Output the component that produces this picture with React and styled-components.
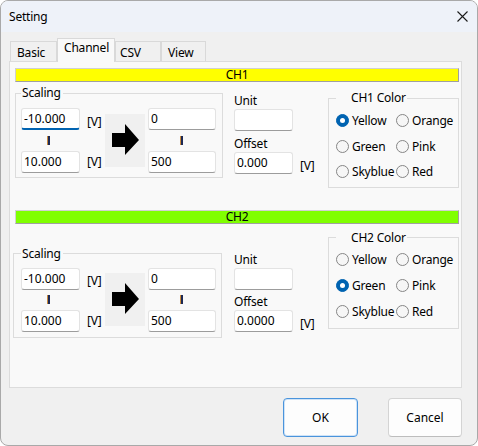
import React from 'react';
import styled, { createGlobalStyle } from 'styled-components';

const GlobalStyle = createGlobalStyle`
  html, body { margin: 0; padding: 0; background: #ffffff; }
  body {
    font-family: "Segoe UI", "Noto Sans", sans-serif;
    font-size: 12px;
    letter-spacing: -0.2px;
    color: #000;
  }
  * { box-sizing: border-box; }
`;

/** Window chrome **/
const Window = styled.div`
  width: 478px;
  height: 446px;
  border: 1px solid #a9a9a9;
  border-radius: 8px;
  background: #f0f0f0;
  overflow: hidden;
  display: flex;
  flex-direction: column;
`;

const TitleBar = styled.div`
  height: 31px;
  flex: none;
  background: #eef2f9;
  display: flex;
  align-items: center;
  justify-content: space-between;
  padding: 0 9px 0 8px;
  font-size: 12px;
`;

const Body = styled.div`
  flex: 1;
  display: flex;
  flex-direction: column;
  padding: 6px 0 0 8px;
`;

/** Tabs **/
const TabStrip = styled.div`
  height: 23px;
  display: flex;
  align-items: flex-end;
  padding-left: 1px;
`;

const Tab = styled.div`
  width: ${p => p.$w}px;
  height: ${p => (p.$active ? 24 : 20)}px;
  margin-bottom: ${p => (p.$active ? -1 : 0)}px;
  padding: ${p => (p.$active ? 1 : 3)}px 0 0 ${p => p.$pl}px;
  line-height: 16px;
  background: ${p => (p.$active ? '#f9f9f9' : '#f0f0f0')};
  border: 1px solid #d9d9d9;
  border-bottom: none;
  position: relative;
  z-index: ${p => (p.$active ? 1 : 0)};
  white-space: nowrap;
`;

const Panel = styled.div`
  width: 453px;
  height: 327px;
  background: #f9f9f9;
  border: 1px solid #dcdcdc;
  display: flex;
  flex-direction: column;
`;

/** Channel section **/
const ChannelBar = styled.div`
  width: 444px;
  height: 14px;
  margin: ${p => p.$mt}px 0 0 5px;
  background: ${p => p.$color};
  border: 1px solid;
  border-color: #d0d0d0 #a0a0a0 #a0a0a0 #d0d0d0;
  text-align: center;
  line-height: 12px;
  font-size: 12px;
`;

const Row = styled.div`
  display: flex;
  align-items: flex-start;
  margin-top: ${p => p.$mt}px;
  padding-right: 2px;
`;

const Group = styled.fieldset`
  margin: ${p => p.$mt}px 0 0 ${p => p.$ml || 0}px;
  width: ${p => p.$w}px;
  padding: ${p => p.$pt}px ${p => p.$pr}px ${p => p.$pb}px ${p => p.$pl}px;
  border: 1px solid #dcdcdc;
  min-width: 0;
`;

const Caption = styled.legend`
  padding: 0 ${p => p.$r}px 0 ${p => p.$l}px;
  line-height: 16px;
  font-size: 12px;
`;

const ScaleGrid = styled.div`
  display: flex;
  align-items: stretch;
`;

const Stack = styled.div`
  width: ${p => p.$w}px;
  margin-left: ${p => p.$ml || 0}px;
  display: flex;
  flex-direction: column;
  justify-content: space-between;
`;

const MarkRow = styled.div`
  height: ${p => p.$h}px;
  display: flex;
  align-items: center;
  padding-left: ${p => p.$pl}px;
`;

const Mark = styled.span`
  width: 3px;
  height: 9px;
  border-left: 1px solid #c98a3c;
  background: #1d2a55;
`;

const VLabel = styled.div`
  height: 22px;
  line-height: 22px;
  padding-top: ${p => p.$dy || 0}px;
  white-space: nowrap;
`;

const ArrowBox = styled.div`
  width: 40px;
  height: 53px;
  margin-left: 5px;
  align-self: center;
  background: #f0f0f0;
  display: flex;
  align-items: center;
  justify-content: center;
`;

const TextBox = styled.input`
  width: ${p => p.$w}px;
  height: 22px;
  margin: 0;
  padding: 0 2px 1px;
  font: inherit;
  font-size: 12px;
  color: #000;
  background: #ffffff;
  border: 1px solid #e3e3e3;
  border-bottom: ${p => (p.$focus ? '2px solid #0063b1' : '1px solid #9c9c9c')};
  border-radius: 3px;
  outline: none;
`;

const UnitCol = styled.div`
  margin: ${p => p.$mt}px 0 0 ${p => p.$ml}px;
  display: flex;
  flex-direction: column;
`;

const FieldLabel = styled.div`
  line-height: 14px;
  margin-top: ${p => p.$mt || 0}px;
`;

const InputLine = styled.div`
  display: flex;
  align-items: flex-start;
  gap: 7px;
  margin-top: 1px;
`;

const ColorGrid = styled.div`
  display: grid;
  grid-template-columns: 60px auto;
  grid-auto-rows: ${p => p.$rh}px;
`;

const RadioItem = styled.div`
  display: flex;
  align-items: center;
  gap: 3px;
  white-space: nowrap;
`;

const RadioDot = styled.span`
  width: 13px;
  height: 13px;
  border-radius: 50%;
  flex: none;
  background: ${p => (p.$on ? '#0063b1' : '#f6f6f6')};
  border: 1px solid ${p => (p.$on ? '#0063b1' : '#868686')};
  display: flex;
  align-items: center;
  justify-content: center;
  &::after {
    content: '';
    display: ${p => (p.$on ? 'block' : 'none')};
    width: 5px;
    height: 5px;
    border-radius: 50%;
    background: #ffffff;
  }
`;

/** Buttons **/
const ButtonRow = styled.div`
  display: flex;
  justify-content: flex-end;
  gap: 30px;
  margin-top: 10px;
  padding-right: 15px;
`;

const Button = styled.button`
  width: ${p => p.$w}px;
  height: 39px;
  font: inherit;
  font-size: 12px;
  color: #000;
  background: #fdfdfd;
  border: 1px solid ${p => (p.$default ? '#4a94dc' : '#d4d4d4')};
  border-bottom-color: ${p => (p.$default ? '#4a94dc' : '#bdbdbd')};
  box-shadow: ${p => (p.$default ? 'inset 0 0 0 1px #cfe3f7' : 'none')};
  border-radius: 4px;
  padding: 0;
`;

const CloseIcon = () => (
  <svg width="11" height="11" viewBox="0 0 11 11">
    <path d="M0.5 0.5 L10.5 10.5 M10.5 0.5 L0.5 10.5" stroke="#1b1b1b" strokeWidth="1.1" />
  </svg>
);

const Arrow = () => (
  <svg width="40" height="53" viewBox="0 0 40 53">
    <polygon points="7,19 20,19 20,10 34,26 20,41 20,33 7,33" fill="#000" />
  </svg>
);

const COLORS = ['Yellow', 'Orange', 'Green', 'Pink', 'Skyblue', 'Red'];

const channels = [
  {
    name: 'CH1', bar: '#ffff00', barMt: 6, rowMt: 3, selected: 'Yellow', offset: '0.000',
    scale: { mt: 0, ml: 5, w: 208, pt: 7, pb: 4, pl: 5, pr: 4, gap: 21, v: [3, 0] },
    unit: { mt: 9, ml: 11, gap: 6, v: 3 },
    color: { mt: 5, pt: 2, pb: 2, rh: 25.5 },
  },
  {
    name: 'CH2', bar: '#80ff00', barMt: 22, rowMt: 6, selected: 'Green', offset: '0.0000',
    scale: { mt: 16, ml: 3, w: 209, pt: 6, pb: 5, pl: 7, pr: 4, gap: 20, v: [2, 0] },
    unit: { mt: 23, ml: 12, gap: 5, v: 3 },
    color: { mt: 0, pt: 1, pb: 3, rh: 26 },
  },
];

const ChannelSection = ({ ch, first }) => {
  const s = ch.scale;
  return (
    <>
      <ChannelBar $color={ch.bar} $mt={ch.barMt}>{ch.name}</ChannelBar>
      <Row $mt={ch.rowMt}>
        <Group $mt={s.mt} $ml={s.ml} $w={s.w} $pt={s.pt} $pb={s.pb} $pl={s.pl} $pr={s.pr}>
          <Caption $l={1} $r={2}>Scaling</Caption>
          <ScaleGrid>
            <Stack $w={59}>
              <TextBox $w={59} readOnly value="-10.000" $focus={first} />
              <MarkRow $h={s.gap} $pl={26}><Mark /></MarkRow>
              <TextBox $w={59} readOnly value="10.000" />
            </Stack>
            <Stack $w={13} $ml={7}>
              <VLabel $dy={s.v[0]}>[V]</VLabel>
              <VLabel $dy={s.v[1]}>[V]</VLabel>
            </Stack>
            <ArrowBox><Arrow /></ArrowBox>
            <Stack $w={68} $ml={3}>
              <TextBox $w={68} readOnly value="0" />
              <MarkRow $h={s.gap} $pl={32}><Mark /></MarkRow>
              <TextBox $w={68} readOnly value="500" />
            </Stack>
          </ScaleGrid>
        </Group>

        <UnitCol $mt={ch.unit.mt} $ml={ch.unit.ml}>
          <FieldLabel>Unit</FieldLabel>
          <InputLine>
            <TextBox $w={59} readOnly value="" />
          </InputLine>
          <FieldLabel $mt={ch.unit.gap}>Offset</FieldLabel>
          <InputLine>
            <TextBox $w={59} readOnly value={ch.offset} />
            <VLabel $dy={ch.unit.v}>[V]</VLabel>
          </InputLine>
        </UnitCol>

        <Group $mt={ch.color.mt} $w={131} $pt={ch.color.pt} $pb={ch.color.pb} $pl={7} $pr={0}
          style={{ marginLeft: 'auto' }}>
          <Caption $l={15} $r={1}>{ch.name} Color</Caption>
          <ColorGrid $rh={ch.color.rh}>
            {COLORS.map(c => (
              <RadioItem key={c}>
                <RadioDot $on={c === ch.selected} />
                {c}
              </RadioItem>
            ))}
          </ColorGrid>
        </Group>
      </Row>
    </>
  );
};

const tabs = [
  { label: 'Basic', w: 47, pl: 6 },
  { label: 'Channel', w: 58, pl: 6, active: true },
  { label: 'CSV', w: 46, pl: 4 },
  { label: 'View', w: 45, pl: 6 },
];

export default function App() {
  return (
    <>
      <GlobalStyle />
      <Window>
        <TitleBar>
          <span>Setting</span>
          <CloseIcon />
        </TitleBar>
        <Body>
          <TabStrip>
            {tabs.map(t => (
              <Tab key={t.label} $w={t.w} $pl={t.pl} $active={t.active}>{t.label}</Tab>
            ))}
          </TabStrip>
          <Panel>
            {channels.map((ch, i) => (
              <ChannelSection key={ch.name} ch={ch} first={i === 0} />
            ))}
          </Panel>
          <ButtonRow>
            <Button $w={75} $default>OK</Button>
            <Button $w={74}>Cancel</Button>
          </ButtonRow>
        </Body>
      </Window>
    </>
  );
}
